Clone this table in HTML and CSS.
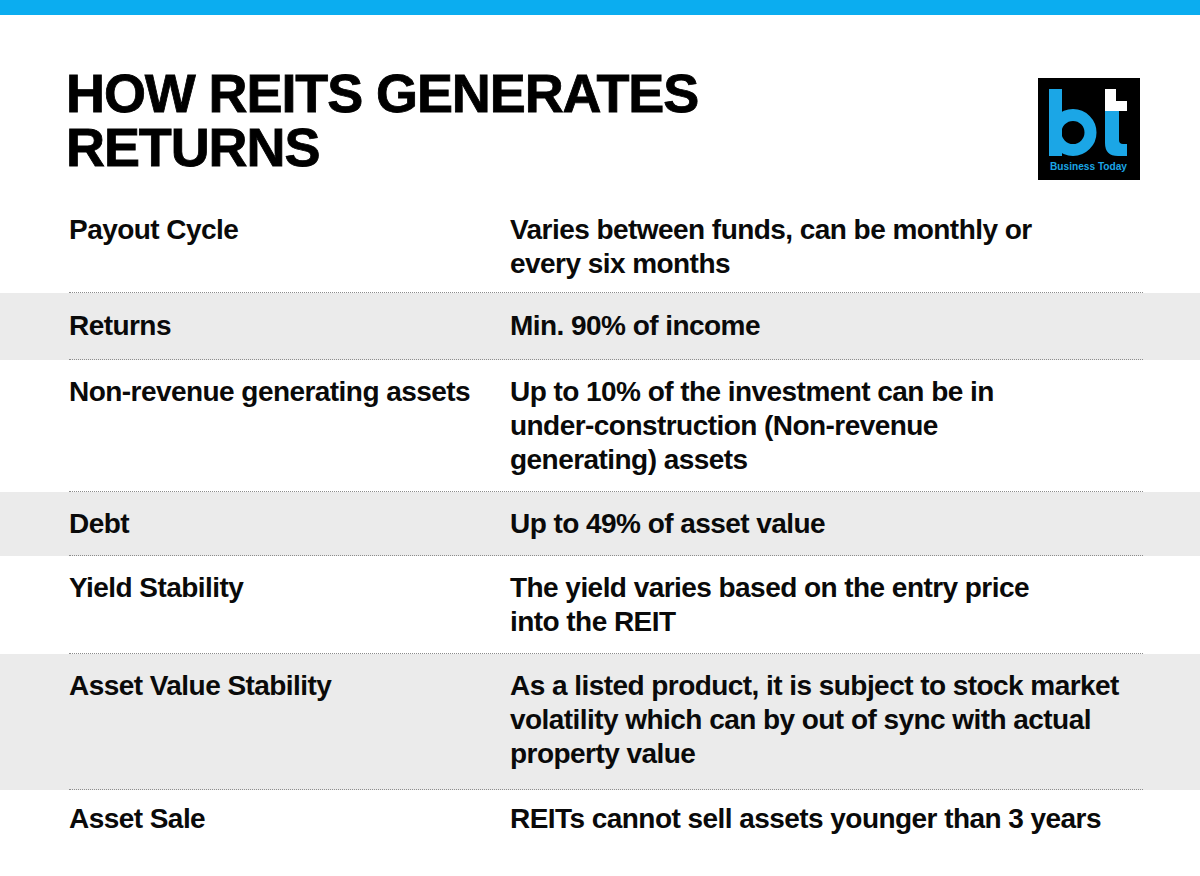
FILE: index.html
```html
<!DOCTYPE html>
<html lang="en">
<head>
<meta charset="utf-8">
<title>How REITs Generates Returns</title>
<link rel="stylesheet" href="styles.css">
</head>
<body>
<div class="topbar"></div>
<header class="header">
  <h1 class="title">HOW REITS GENERATES<br>RETURNS</h1>
  <div class="logo" aria-label="Business Today">
    <svg width="102" height="102" viewBox="0 0 102 102">
      <rect x="0" y="0" width="102" height="102" fill="#000"/>
      <rect x="11" y="11" width="13" height="67" fill="#1ba6e6"/>
      <circle cx="35" cy="54.5" r="17.5" fill="none" stroke="#1ba6e6" stroke-width="12"/>
      <path d="M67 11 H78 V23 H89 V33 H67 Z" fill="#fff"/>
      <path d="M67 33 H81 V62 Q81 66 85 66 H89 V78 H80 Q67 78 67 65 Z" fill="#1ba6e6"/>
      <text x="12" y="92" class="logo-text" textLength="77" lengthAdjust="spacingAndGlyphs">Business Today</text>
    </svg>
  </div>
</header>
<main class="table">
  <div class="row first">
    <div class="row-inner">
      <div class="label">Payout Cycle</div>
      <div class="value">Varies between funds, can be monthly or<br>every six months</div>
    </div>
  </div>
  <div class="row alt short">
    <div class="row-inner">
      <div class="label">Returns</div>
      <div class="value">Min. 90% of income</div>
    </div>
  </div>
  <div class="row">
    <div class="row-inner">
      <div class="label">Non-revenue generating assets</div>
      <div class="value">Up to 10% of the investment can be in<br>under-construction (Non-revenue<br>generating) assets</div>
    </div>
  </div>
  <div class="row alt">
    <div class="row-inner">
      <div class="label">Debt</div>
      <div class="value">Up to 49% of asset value</div>
    </div>
  </div>
  <div class="row">
    <div class="row-inner">
      <div class="label">Yield Stability</div>
      <div class="value">The yield varies based on the entry price<br>into the REIT</div>
    </div>
  </div>
  <div class="row alt tall">
    <div class="row-inner">
      <div class="label">Asset Value Stability</div>
      <div class="value">As a listed product, it is subject to stock market<br>volatility which can by out of sync with actual<br>property value</div>
    </div>
  </div>
  <div class="row last">
    <div class="row-inner">
      <div class="label">Asset Sale</div>
      <div class="value">REITs cannot sell assets younger than 3 years</div>
    </div>
  </div>
</main>
</body>
</html>
```
FILE: styles.css
```css
html, body {
  margin: 0;
  padding: 0;
  background: #ffffff;
}

body {
  width: 1200px;
  height: 876px;
  overflow: hidden;
  font-family: "Liberation Sans", Arial, sans-serif;
  color: #0a0a0a;
}

.topbar {
  height: 15px;
  background: #0badf0;
}

.header {
  display: flex;
  justify-content: space-between;
  align-items: flex-start;
  padding: 51px 60px 0 66px;
}

.title {
  margin: 0;
  font-size: 54px;
  line-height: 54px;
  font-weight: 700;
  letter-spacing: -1.1px;
  color: #000;
  -webkit-text-stroke: 0.8px #000;
}

.logo {
  margin-top: 12px;
  width: 102px;
  height: 102px;
}

.logo svg {
  display: block;
}

.logo-text {
  font-family: "Liberation Sans", Arial, sans-serif;
  font-weight: 700;
  font-size: 10.5px;
  fill: #1ba6e6;
}

.table {
  margin-top: 17px;
}

.row.alt {
  background: #ebebeb;
}

.row-inner {
  display: grid;
  grid-template-columns: 441px 1fr;
  margin: 0 57px 0 69px;
  padding: 15px 0 14px;
  border-bottom: 1px dotted #8c8c8c;
  font-size: 28px;
  line-height: 34px;
  font-weight: 700;
  letter-spacing: -0.55px;
}

.row.first .row-inner {
  padding-top: 16px;
  padding-bottom: 11px;
}

.row.short .row-inner {
  padding-top: 16px;
  padding-bottom: 16px;
}

.row.tall .row-inner {
  padding-bottom: 18px;
}

.row.last .row-inner {
  border-bottom: none;
  padding-top: 12px;
}

.label,
.value {
  white-space: nowrap;
}
```
